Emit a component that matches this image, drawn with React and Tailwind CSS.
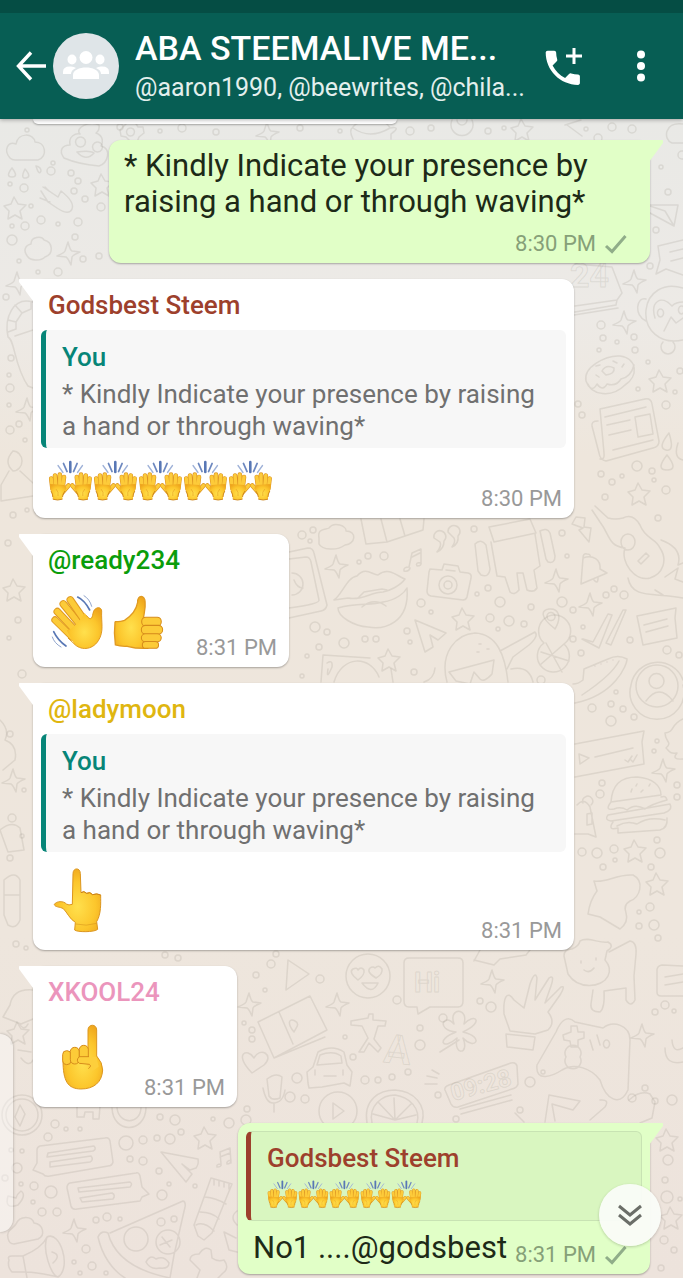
const circles = [
    // top left
    [27, 130, 2], [51, 171, 4], [53, 163, 2], [71, 173, 3], [78, 181, 3], [10, 184, 2], [24, 188, 4], [74, 191, 3],
    [85, 199, 3], [101, 207, 4], [31, 206, 2], [41, 220, 4], [58, 224, 2], [78, 222, 4], [12, 226, 2], [25, 226, 4],
    [12, 240, 5], [75, 237, 3], [19, 261, 2], [83, 259, 3], [38, 272, 2], [58, 272, 4], [99, 256, 3], [6, 297, 3],
    [11, 358, 3], [9, 375, 2], [10, 388, 4], [9, 405, 2], [19, 424, 3], [10, 430, 4], [25, 440, 2], [13, 515, 3], [27, 510, 2],
    [8, 543, 3], [18, 620, 3], [9, 638, 2], [22, 674, 4], [10, 734, 3], [24, 790, 2], [12, 818, 4], [22, 836, 2], [10, 858, 3], [16, 944, 3],
    // strip under the header
    [120, 127, 3], [160, 131, 2], [182, 128, 4], [216, 132, 3], [300, 128, 3], [340, 131, 2], [410, 131, 4], [431, 128, 3], [488, 131, 3],
    [504, 128, 2], [586, 129, 2], [612, 127, 4], [632, 129, 4], [598, 138, 4], [661, 167, 2], [682, 155, 4], [668, 192, 3],
    [656, 230, 3], [650, 266, 3], [601, 325, 4], [603, 338, 3], [617, 342, 2], [634, 337, 3], [599, 350, 2], [635, 350, 3],
    [648, 362, 2], [680, 371, 3], [638, 389, 2], [666, 405, 4], [675, 392, 2], [578, 404, 3], [582, 415, 3],
    [601, 474, 3], [637, 466, 5], [652, 471, 3], [622, 476, 2], [612, 482, 3], [654, 480, 2], [666, 490, 4], [605, 497, 3],
    // between the bubbles
    [302, 535, 4], [313, 530, 3], [368, 556, 3], [359, 562, 2], [384, 556, 4], [474, 529, 3], [562, 533, 3], [567, 556, 2],
    [421, 603, 4], [431, 612, 2], [488, 588, 3], [477, 594, 2], [500, 602, 5], [531, 607, 3], [562, 602, 5], [573, 610, 3],
    [315, 627, 5], [327, 632, 3], [344, 643, 5], [365, 639, 3], [376, 639, 3], [319, 647, 3], [307, 656, 2], [407, 631, 3], [410, 642, 2],
    [490, 618, 4], [509, 621, 5], [524, 624, 3], [498, 629, 2], [583, 627, 2], [573, 639, 3], [630, 640, 3], [581, 653, 3],
    [606, 595, 3], [614, 589, 3], [624, 595, 4], [658, 518, 3], [667, 650, 4], [679, 655, 3], [414, 672, 3], [302, 676, 2],
    [541, 680, 4], [592, 708, 4], [611, 704, 3], [616, 692, 2], [623, 709, 3], [611, 721, 5], [634, 717, 3], [657, 741, 2], [654, 751, 2],
    [602, 783, 3], [600, 794, 4], [677, 785, 3], [677, 797, 3], [582, 852, 4], [597, 853, 5], [614, 849, 4], [615, 860, 2], [603, 867, 3],
    [657, 840, 3], [660, 853, 5], [651, 867, 3], [650, 907, 4], [639, 912, 2], [654, 925, 5], [639, 926, 3], [658, 938, 3],
    [310, 541, 2], [26, 948, 2], [165, 955, 3], [178, 958, 3], [276, 954, 3], [256, 975, 3], [271, 964, 4], [265, 990, 2],
    // lower right
    [244, 1023, 2], [252, 1030, 3], [252, 1039, 3], [320, 979, 4], [397, 1000, 4], [345, 1037, 2], [353, 1057, 3], [297, 1078, 5],
    [365, 1080, 4], [378, 1080, 3], [392, 1077, 3], [408, 1072, 3], [290, 1097, 5], [305, 1099, 4], [247, 1109, 3], [246, 1120, 5],
    [420, 1045, 5], [420, 1028, 3], [443, 1018, 4], [480, 1001, 3], [491, 1007, 5], [438, 1095, 3], [456, 1119, 3], [530, 1082, 5],
    [543, 1072, 2], [520, 1110, 3], [665, 1005, 4], [655, 1012, 3], [674, 1011, 2], [632, 1098, 4], [645, 1088, 3], [655, 1101, 3], [672, 1100, 5],
    [668, 1160, 5], [665, 1180, 3], [667, 1197, 6], [680, 1199, 2], [664, 1240, 4], [674, 1250, 3], [661, 1268, 3],
    // lower left
    [55, 1124, 4], [66, 1129, 2], [80, 1129, 2], [48, 1137, 4], [22, 1151, 2], [11, 1150, 2], [17, 1168, 5], [5, 1178, 3],
    [126, 1143, 7], [143, 1140, 4], [157, 1138, 3], [170, 1139, 5], [181, 1132, 3], [160, 1117, 3], [175, 1120, 5], [229, 1123, 5],
    [213, 1119, 2], [130, 1159, 3], [143, 1161, 4], [159, 1171, 3], [34, 1186, 4], [21, 1184, 2], [51, 1192, 6], [33, 1202, 2],
    [42, 1212, 4], [57, 1212, 4], [162, 1195, 5], [169, 1184, 2], [195, 1186, 2], [96, 1220, 3], [107, 1217, 4], [120, 1219, 2],
    [86, 1249, 4], [74, 1262, 2], [92, 1266, 4], [80, 1273, 2], [106, 1273, 2],
]

const sparkles = [
    [268, 133], [69, 253], [18, 283], [635, 281], [625, 322], [28, 409], [337, 566], [557, 580], [591, 604], [664, 770],
    [338, 1004], [250, 1004], [493, 981], [75, 1230], [643, 1035], [14, 780],
]

const stars = [
    [15, 208], [102, 185], [522, 130], [660, 381], [639, 494], [463, 619], [389, 660], [635, 851], [657, 884],
    [205, 1138], [18, 1033], [667, 1140], [671, 1218], [14, 590],
]

const doodles = [
    // clouds
    "M10 158C3 150 8 141 16 144C18 132 34 133 35 142C46 142 48 157 38 160H15Q12 160 10 158",
    "M28 257C22 250 26 245 31 244C31 236 42 236 44 240C53 242 54 254 45 257C40 262 30 260 28 257",
    "M319 538C317 528 326 530 329 528C334 521 347 526 346 531C357 531 356 544 345 545C337 551 322 550 319 544Z",
    "M8 1238C6 1230 13 1229 16 1224C20 1215 32 1216 34 1223C43 1224 46 1235 38 1239L14 1244Q9 1244 8 1238",
    "M683 124C664 121 663 140 672 143H683",
    // raindrops
    "M12 168Q5 177 12 177T12 168M25 169Q20 179 26 178T25 169M36 166Q39 176 41 171Q41 167 36 166",
    "M669 433Q657 448 666 450T669 433M678 443Q673 458 683 460M667 455Q655 470 667 470T667 455",
    // smiling pile
    "M64 158C58 150 63 145 70 145C68 136 76 133 80 134C74 128 90 120 99 125Q100 130 96 133C104 136 103 143 101 146C112 149 108 163 99 166C88 165 73 162 64 158M77 152Q86 162 94 153Q90 150 77 152",
    "M80 137a5 5 0 1 0 1 0M97 142a5 5 0 1 0 1 0",
    // hand
    "M43 187L58 197L61 191Q75 202 72 209Q69 216 57 208L48 202L41 191M40 198L50 202M45 187L49 191",
    // planet
    "M353 139C350 133 350 129 353 127C359 118 386 118 390 128Q402 126 391 134L391 139M353 128Q370 140 390 128",
    "M125 125l4-4 6 1 3 5 5 0 1 6-5 4-2 5-7-1-4-4-5-1-1-6zM130 128a4 4 0 1 0 1 0",
    "M452 120a11 11 0 1 0 20 0M457 120a5 5 0 1 0 10 0M565 125L581 120M567 125L582 136",
    // backpack
    "M33 302C13 296 4 318 8 337C15 340 14 366 28 386L33 388M8 332L16 329V322L8 320M16 322L22 313L15 305M22 313L31 309V302M15 336L33 330",
    // bust
    "M13 451A9 10 0 1 1 13 471Q3 462 13 451M9 471L1 485V501L33 496M20 471L33 483",
    // calendar and bubble on the right
    "M575 264L612 267L622 293L617 300L575 306M575 312L616 305L617 300M574 315L618 308",
    "M683 240L658 246L660 260L656 274L666 269L683 275M670 252L683 249M671 261L683 258",
    "M650 205L678 205L674 226L650 213M650 206L665 211L674 226",
    // monkey
    "M683 288C664 282 648 292 646 310C644 330 660 345 683 340M646 299C637 296 633 315 646 321M655 318C650 302 661 294 672 306Q676 302 683 302M664 331l7-14 5 6 7-5M660 309a3 4 0 1 0 1 0M681 306a3 4 0 1 0 1 0M663 342a7 7 0 1 0 10 0",
    // donut
    "M586 381C583 367 606 355 620 356C637 358 639 376 625 385C612 398 591 396 586 381M588 384Q592 393 597 384Q603 392 607 384Q616 387 621 379Q631 377 634 365M602 371q4-7 12-3q1 6-8 7zM596 366l4-1M613 361l4 2M622 367l2-3M596 375l3 2",
    // newspaper
    "M600 409L645 399Q651 398 652 404L659 441Q659 447 653 448L606 461Q600 460 599 453L592 426Q591 421 598 421M600 409L604 453Q605 460 600 459M605 417L646 407M607 425L630 420M609 435L631 430M613 450L653 440M635 417L650 414L653 434L638 437Z",
    // guitar at the right edge
    "M592 510L600 522C610 535 608 546 625 548C620 562 635 582 650 578C663 574 668 560 660 548C656 538 645 539 640 525Q633 513 623 518Q615 520 608 518L595 506M621 542a7 8 0 1 0 14 0a7 8 0 1 0-14 0M638 561l8-8 3 3-8 8zM661 540Q683 548 678 565L683 563M628 578C632 600 655 592 683 598M665 577L678 568L675 579L683 582M655 590L663 595",
    // gift box and phone
    "M361 519L366 544L387 542L423 530L424 519M387 542L381 519M405 536L400 519",
    "M289 552L308 548Q313 548 314 553L327 605Q326 610 321 611L289 618M289 559L306 557Q310 557 311 562L319 600Q320 604 289 608M292 573a10 10 0 1 1 0 22M294 580q3 8 9 8",
    // lips and camera
    "M334 600C342 595 347 577 357 576C366 566 372 575 378 575C389 566 398 577 405 579C400 586 389 591 383 592C371 592 362 601 348 598ZM338 608C357 602 370 606 383 602C397 600 405 592 407 588C410 624 383 630 368 627C354 626 338 617 338 608M359 597l5-5 18-3 5 1M362 607q12-10 24-1",
    "M430 569L442 570L444 564L458 566L460 572L468 573Q472 574 471 578L467 597Q466 600 463 600L431 596Q427 595 427 591L429 572Z",
    "M439 585a9 9 0 1 0 18 0a9 9 0 1 0-18 0M444 585a4 4 0 1 0 8 0a4 4 0 1 0-8 0M446 570l9 1",
    // quotes, notes
    "M434 538A6 6 0 1 1 444 541Q444 549 437 552Q442 546 440 542ZM448 532A6 6 0 1 1 458 536Q459 544 452 547Q456 542 454 538Z",
    "M409 567L412 553L421 549L421 563M409 567q-6 0-5 4q5 1 6-3M421 563q-6-1-4 3q5 0 4-4M412 557l8-4",
    // android
    "M489 527L530 519L536 533L494 542ZM491 542L497 576L505 577L510 592Q514 596 519 590L517 573L523 573L527 590Q534 593 537 588L534 570L540 566L535 534M475 544Q481 538 486 545L490 569Q489 578 481 575L478 571ZM540 531Q547 527 550 533L555 556Q555 564 548 562L546 559Z",
    // bell, bolt
    "M583 558C593 554 601 560 600 569L607 573L581 584ZM583 558q0-5 4-4q4 0 3 3M594 580q4 5 4-2",
    "M576 517L585 518L584 527L591 528L589 542L579 530L583 528L572 524Z",
    // pins, plane, ticks, note
    "M554 628C540 617 541 610 549 609C559 608 562 617 555 629ZM547 617a4 4 0 1 0 8-1a4 4 0 1 0-8 1M415 620L446 633L438 640L430 635L433 647L425 652Z",
    "M583 639L593 642L608 614L612 615L599 648L582 639ZM606 643L611 645L626 610L623 610Z",
    "M637 616L676 608L675 618L677 638L643 645ZM644 625L667 619M646 632L668 626",
    // pineapple with glasses
    "M447 682C439 652 457 634 475 633C497 634 505 655 508 682M449 672L494 660L492 674Q484 683 480 679L474 672L470 684L456 681ZM500 651L535 632Q539 636 529 645L513 657L507 669M511 669Q529 665 533 682",
    "M479 644l2 0M487 649l2 0M477 652l2 0M435 668Q434 679 424 682M544 643a16 16 0 1 0 20 1a16 16 0 1 0-20-1M540 665L564 644M546 643L562 672M541 652L569 661",
    // radio
    "M321 682L323 655L370 658M334 682C342 655 370 655 379 677M327 663q6-4 5 4q-6 14-4 2M391 669L393 682",
    // sneaker, avatar, ribbon
    "M575 703C615 695 627 665 627 659Q618 654 608 659L584 669L583 680Q578 684 573 684M582 695Q612 675 619 661M595 666v0M601 664v0M607 662v0M613 660v0",
    "M631 685a27 27 0 1 0 52 0M631 685a27 27 0 0 1 52-5M636 686a21 21 0 0 0 42 0a21 21 0 0 0-42 0M649 681a7 7 0 1 0 15 0a7 7 0 1 0-15 0M646 701Q659 683 673 701",
    "M575 744L644 731L642 742L644 764L575 777M595 757L633 748M579 754l10 4-9 6zM625 760l3 2 4-6M631 760l2 2 4-7",
    "M683 719C670 725 675 732 665 733C665 742 673 742 666 748C670 752 670 754 677 753Q671 760 683 759",
    // burger
    "M611 802C612 785 620 777 637 777C653 778 661 786 661 795L611 802M611 802Q604 811 614 809Q621 806 627 810Q635 803 645 809Q652 804 667 800Q666 795 661 797M608 815L670 804Q673 810 664 813L611 821Q604 820 608 815M613 822Q607 831 618 828L618 833L660 830Q668 828 667 818M617 826q10-6 20-2 12-8 28-4M631 792l1-3M641 792l2-2M636 786l1-2M649 786l1-2",
    "M575 834L588 834L596 837L590 807Q584 797 577 805M587 814L592 813L592 824L587 825ZM583 803a5 5 0 1 1 8 2",
    "M594 881C608 883 615 874 633 875C645 881 640 898 630 901Q623 905 626 913Q629 922 620 929L600 917L588 914Q590 900 597 891Z",
    // puppy and lower right
    "M572 949Q579 946 580 941C588 936 600 944 608 942Q615 946 607 951L605 960Q612 968 608 976C602 988 578 990 568 974L564 956Q564 949 572 949M581 961v2M596 958v2M584 970q5 4 10-2M609 952L630 941Q637 942 636 954L634 976L635 1000Q631 1008 626 1000L626 988L604 991Q605 1008 600 1012Q590 1012 591 1004L593 990",
    "M683 966L662 965Q657 966 657 970V992Q657 996 661 996H683M665 977L683 974M665 985L683 982",
    // cursor, face, speech bubble
    "M288 960L286 990L309 974Z",
    "M346 976a22 22 0 1 0 44 0a22 22 0 1 0-44 0M358 980q-10-8-5-11q4-2 5 1q3-4 6 0q1 5-6 10M376 978q-10-6-6-10q3-2 5 0q4-4 7 1q1 5-6 9M362 983h16q-6 13-16 0",
    "M409 958H458Q463 958 463 963V1001Q463 1007 458 1007H430L418 1014L417 1007H409Q404 1007 404 1001V963Q404 958 409 958",
    "M474 960L494 965L500 959L526 955L530 950M480 950L474 961",
    // map
    "M258 1022L310 996L327 1030L274 1058ZM274 1058L325 1037M279 1012L293 1044M294 1032C286 1022 290 1018 295 1021C301 1024 295 1029 294 1032",
    // kanji, clover
    "M351 1021L368 1018L369 1014L373 1014L373 1020L386 1021L385 1026L378 1026L374 1039L381 1048L378 1052L369 1043L364 1052L359 1052L368 1038L362 1026L351 1025Z",
    "M456 1032C435 1030 444 1012 454 1024C448 1007 469 1007 464 1024C475 1012 485 1022 463 1032C485 1037 475 1051 463 1038C470 1055 453 1056 457 1038C443 1051 435 1040 456 1032M459 1040L440 1052",
    // hand holding
    "M504 1014C503 998 507 989 514 1000L524 1008L530 984Q535 970 537 978L535 1000L549 978Q555 974 551 986L545 1003L561 987Q566 985 560 995L548 1012Q556 1022 548 1030L535 1034L510 1031ZM506 1034L535 1037L533 1050L507 1047Z",
    // gamepad
    "M575 1022C567 1014 560 1022 556 1032L537 1065C535 1083 553 1076 562 1070C575 1062 592 1069 600 1080C606 1100 620 1107 628 1090L630 1040C630 1025 613 1020 603 1028ZM563 1035l8-3 0-6 6 0 1 6 6 0 0 6-6 2 0 7-7 0-1-6-6-1zM566 1057a8 8 0 1 0 14 0a8 8 0 1 0-14 0M590 1040l3 10M597 1035l3 10M606 1040a3 4 0 1 0 1 0",
    // heart, mic, car
    "M252 1073C233 1054 247 1047 254 1058C260 1046 275 1055 264 1065ZM267 1079Q276 1072 282 1077L280 1098Q272 1101 269 1096ZM263 1088Q266 1103 273 1103Q283 1103 285 1090M274 1103V1112",
    "M308 1083L307 1072L313 1067L318 1052Q332 1044 344 1052L347 1065L352 1072L350 1086L344 1083L322 1087L309 1088ZM317 1065L320 1055Q333 1050 341 1056L342 1063ZM315 1070v5M343 1070v5M324 1076h12",
    // alarm clock
    "M449 1085L511 1063Q516 1062 517 1066L518 1084Q517 1088 512 1089L458 1107Q453 1108 451 1104L445 1090Q444 1087 449 1085M460 1109L511 1095M461 1114L512 1100M425 1084L437 1084M427 1076L437 1078M432 1070L439 1074",
    // play, orange
    "M319 1111a18 18 0 1 0 38 0a18 18 0 1 0-38 0M333 1103L344 1111L333 1119Z",
    "M367 1123C363 1099 380 1090 395 1090C414 1091 427 1105 422 1123M372 1123C368 1105 383 1095 395 1095C409 1097 421 1108 417 1123M395 1120L394 1098M395 1120L378 1102M395 1120L411 1104M395 1120L373 1114M395 1120L416 1115",
    "M549 1095L580 1101L573 1110L552 1104L555 1121M549 1095L545 1122M515 1113L524 1122M590 1120L605 1107Q610 1099 600 1100M629 1100Q640 1090 650 1094L655 1102L652 1118L640 1123",
    "M683 1062Q665 1066 665 1048M683 1048Q673 1054 672 1040",
    // left column
    "M33 990Q13 988 10 1005L3 1017L21 1024L33 1019M19 1023q5 9 9 1M2 1115a19 19 0 1 0 40 0a19 19 0 1 0-40 0M6 1115a15 15 0 1 0 32 0a15 15 0 1 0-32 0M20 1105L25 1114L20 1126L15 1117Z",
    "M77 1106V1117H84L85 1112H93V1119H99L100 1106M112 1108C113 1134 145 1134 146 1108M117 1108C119 1125 140 1125 141 1108",
    "M18 1050L31 1052M21 1058Q29 1068 33 1060M8 1196Q4 1210 18 1205Q27 1195 21 1191Q17 1194 16 1198Z",
    "M0 720Q10 730 5 740Q18 745 15 760L3 770M4 880Q15 870 20 880V920Q16 930 8 925L4 915ZM4 895H20M0 830Q12 820 20 828L24 850L8 852Z",
    // chat notes
    "M40 1146L105 1138Q109 1137 110 1141L113 1162Q112 1166 108 1166L50 1176Q45 1177 43 1174L33 1170L37 1163L37 1150Q37 1147 40 1146M48 1153L94 1146Q97 1149 93 1151L47 1157ZM50 1162L91 1156Q94 1160 90 1162L50 1167Z",
    "M70 1183L136 1173Q139 1172 140 1176L142 1187L149 1194L142 1197L140 1201L77 1209Q72 1210 71 1206L67 1188Q67 1184 70 1183M78 1188L130 1182Q133 1184 130 1187L79 1192ZM80 1198L112 1193Q116 1195 113 1199L82 1202Z",
    // paper plane, notes, bottle
    "M161 1152L198 1159Q199 1164 196 1168L190 1170L182 1164L192 1174L186 1182Z",
    "M221 1164L220 1152L230 1148L231 1163M221 1164q-5 0-4 3q5 0 4-3M231 1160q-5 1-4 4q4 0 4-4M220 1157l10-4",
    "M211 1178L232 1184L212 1233L204 1240L198 1236L194 1225ZM205 1197Q216 1198 226 1204M200 1212Q212 1212 219 1219M196 1225Q204 1221 214 1231M214 1179v6M219 1181v5M224 1182v5M229 1184v5",
    // pizza
    "M110 1233L183 1201Q186 1202 185 1207L174 1255L170 1278M98 1237Q101 1230 108 1233C115 1260 140 1272 170 1278M98 1237C102 1255 112 1270 125 1278M124 1239a12 12 0 1 0 24 0a12 12 0 1 0-24 0M156 1242a12 12 0 1 0 24 0a12 12 0 1 0-24 0M160 1245l12-5M162 1237l8 10M157 1222a4 4 0 1 0 8 0a4 4 0 1 0-8 0M171 1219a3 3 0 1 0 6 0a3 3 0 1 0-6 0M146 1262q4-8 10-3q8-4 13 4q0 6-9 5q-10 2-14-6",
    // megaphone
    "M9 1260Q7 1256 12 1256L23 1256Q42 1248 47 1237C60 1230 72 1268 58 1277C48 1275 38 1272 26 1272L12 1272Q7 1267 9 1260M23 1256L27 1278M47 1237C42 1250 51 1275 58 1277M52 1252Q62 1255 53 1263",
    // dog and leaf by the bubble
    "M190 1260Q190 1254 199 1254Q205 1245 211 1250L212 1258Q217 1262 224 1260Q230 1268 223 1273L218 1278M190 1260L200 1270L197 1278M224 1232L236 1238M224 1232L229 1250L237 1252M237 1211Q229 1217 237 1225",
]

const Wallpaper = () => (
    <svg
        className="absolute inset-0 w-full h-full"
        viewBox="0 119 683 1159"
        preserveAspectRatio="xMidYMin slice"
        fill="none"
        stroke="#8a8577"
        strokeOpacity="0.17"
        strokeWidth="1.5"
        strokeLinecap="round"
        strokeLinejoin="round"
        aria-hidden="true"
    >
        { circles.map(([x, y, r], i) => <circle key={i} cx={x} cy={y} r={r} />) }
        { sparkles.map(([x, y], i) => (
            <path key={i} transform={`translate(${x} ${y})`} d="M-1-11Q1-3 3-2L11-1Q4 2 3 4L2 12Q-1 5-3 4L-12 3Q-5 0-4-2Z" />
        )) }
        { stars.map(([x, y], i) => (
            <path key={i} transform={`translate(${x} ${y})`} d="M-1-11L3-4L11-3L5 3L7 11L0 7L-7 11L-6 3L-11-2L-4-4Z" />
        )) }
        { doodles.map((d, i) => <path key={i} d={d} />) }
        <g fontFamily="Roboto, sans-serif" fontWeight="700" strokeWidth="1">
            <text x="414" y="992" fontSize="27">Hi</text>
            <text x="383" y="1062" fontSize="40" transform="rotate(6 383 1062)">A</text>
            <text x="453" y="1101" fontSize="24" transform="rotate(-15 453 1101)">09:28</text>
            <text x="570" y="287" fontSize="34">24</text>
        </g>
    </svg>
)

const EmojiPaint = () => (
    <svg className="absolute w-0 h-0" aria-hidden="true">
        <defs>
            <radialGradient id="skin" cx="0.5" cy="0.6" r="0.65">
                <stop offset="0" stopColor="#ffe04d" />
                <stop offset="0.6" stopColor="#fcc62c" />
                <stop offset="1" stopColor="#eea51d" />
            </radialGradient>
        </defs>
    </svg>
)

const OneRaised = () => (
    <>
        <g strokeLinecap="round">
            <path stroke="#dc9421" strokeWidth="4.6" d="M3.2 18.5L4.5 29M7 15.5L8 27M11.8 14.6V27M16 17L14.6 28M20.5 25.5L14 33" />
            <path stroke="#fdcb3a" strokeWidth="3.4" d="M3.2 18.5L4.5 29M7 15.5L8 27M11.8 14.6V27M16 17L14.6 28M20.5 25.5L14 33" />
        </g>
        <path fill="url(#skin)" d="M2 24L16 25L18.5 28C17 33 14 34 14.5 39Q9.5 41 4.8 39C5 34 2 31 2 24" />
        <path stroke="#c98018" strokeWidth="0.9" d="M4.8 39.2Q9.5 40.8 14.5 39.2M14.5 37Q14.6 34 17 31M4.8 37Q4.8 34 3 31" />
        <path stroke="#e8a526" strokeWidth="0.7" d="M8 29Q11 32 10 36" />
    </>
)

const RaisedHands = ({ className }) => (
    <svg className={className} viewBox="0 0 45 42" fill="none" role="img" aria-label="Raising hands">
        <g stroke="#6c87bf" strokeLinecap="round">
            <path strokeWidth="2.6" stroke="#5877b5" d="M22.3 2V12" />
            <path strokeWidth="1.8" d="M15.5 3.5L19 11.5M29.1 3.5L25.6 11.5" />
            <path strokeWidth="1.3" stroke="#9fb2d8" d="M10 5.5L15 12.5M34.5 5.5L29.5 12.5" />
        </g>
        <OneRaised />
        <g transform="translate(44.8 0) scale(-1 1)"><OneRaised /></g>
    </svg>
)

const Wave = () => (
    <svg className="w-14 h-[58px]" viewBox="12 20 168 174" fill="none" role="img" aria-label="Waving hand">
        <g strokeLinecap="round">
            <path stroke="#e09a22" strokeWidth="22" d="M33 101L85 152" />
            <path stroke="#fccb38" strokeWidth="16" d="M33 101L85 152" />
            <path stroke="#e09a22" strokeWidth="23" d="M40 76L96 135" />
            <path stroke="#fccb38" strokeWidth="17" d="M40 76L96 135" />
            <path stroke="#e09a22" strokeWidth="23" d="M58 53L112 120" />
            <path stroke="#fccb38" strokeWidth="17" d="M58 53L112 120" />
            <path stroke="#e09a22" strokeWidth="23" d="M79 41L128 112" />
            <path stroke="#fccb38" strokeWidth="17" d="M79 41L128 112" />
        </g>
        <path fill="url(#skin)" d="M68 132C85 132 110 100 122 80C135 99 143 104 146 84C149 60 173 58 173 74C171 108 181 135 163 163C144 193 108 192 90 172Z" />
        <path stroke="#e09a22" strokeWidth="3" d="M127 87C139 103 144 99 147 82C150 60 173 60 173 74C171 108 181 135 163 163C144 193 108 192 90 172L72 155" />
        <g stroke="#5877b5" strokeWidth="5" strokeLinecap="round">
            <path d="M101 32Q122 42 137 71M29 136Q42 163 66 179" />
            <path strokeWidth="3" stroke="#91a5cd" d="M120 28Q137 38 143 60M25 152Q31 171 51 182" />
        </g>
    </svg>
)

const ThumbsUp = () => (
    <svg className="w-[54px] h-[58px]" viewBox="200 22 160 172" fill="none" role="img" aria-label="Thumbs up">
        <path fill="url(#skin)" stroke="#e09a22" strokeWidth="4" d="M209 107Q228 107 237 103C258 90 272 72 276 50C275 26 298 28 298 48C300 68 295 80 293 98L306 186Q275 188 245 180Q225 181 210 176Q205 140 209 107" />
        <g fill="#fccb38" stroke="#d68c1c" strokeWidth="3">
            <rect x="288" y="94" width="58" height="26" rx="12" />
            <rect x="287" y="118" width="63" height="26" rx="12" />
            <rect x="287" y="143" width="59" height="24" rx="12" />
            <rect x="290" y="166" width="48" height="20" rx="10" />
        </g>
    </svg>
)

const PointUpBack = () => (
    <svg className="w-[54px] h-[68px]" viewBox="62 47 160 204" fill="none" role="img" aria-label="Backhand index pointing up">
        <path fill="url(#skin)" stroke="#dc961f" strokeWidth="3" d="M130 70C130 51 152 51 152 70L154 127Q163 120 171 129Q181 123 189 133Q201 128 213 134C213 160 215 190 201 214L204 237C195 246 142 246 135 239L137 216C120 206 113 187 101 175C91 169 75 171 74 162C80 152 102 151 110 161Q117 166 128 162Z" />
        <path stroke="#c97f15" strokeWidth="2.5" d="M154 127Q163 120 171 129Q181 123 189 133Q201 128 213 134" />
        <path stroke="#d18c18" strokeOpacity="0.6" strokeWidth="2.5" d="M138 221Q170 229 201 219" />
    </svg>
)

const PointUp = () => (
    <svg className="w-[54px] h-[68px]" viewBox="76 519 162 204" fill="none" role="img" aria-label="Index pointing up">
        <path fill="url(#skin)" stroke="#dc961f" strokeWidth="3" d="M172 540C172 521 198 521 198 540V618Q216 638 216 660C214 697 190 717 150 717C112 716 97 695 97 630L100 610L172 600Z" />
        <g fill="#fccb38" stroke="#d68c1c" strokeWidth="3">
            <rect x="96" y="602" width="25" height="42" rx="12" />
            <rect x="119" y="592" width="27" height="50" rx="13" />
            <rect x="146" y="586" width="27" height="48" rx="13" />
        </g>
        <path fill="#fdcf3c" d="M146 621H197L204 650L182 665L168 642L146 641Q134 631 146 621" />
        <path stroke="#d68c1c" strokeWidth="3" strokeLinecap="round" d="M174 620H146Q134 631 146 640L176 643Q184 648 174 655" />
    </svg>
)

const Tick = () => (
    <svg className="w-[23px] h-5" viewBox="0 0 23 20" fill="none" stroke="#90ad89" strokeWidth="3" role="img" aria-label="Sent">
        <path d="M2 12L8 17.5L21.5 2" />
    </svg>
)

const Time = ({ children, sent }) => (
    <div className={`flex flex-row items-center gap-2 text-[22px] leading-[22px] whitespace-nowrap ${ sent ? `text-[#86a078] pr-[15px]` : `text-[#999999] pr-1` }`}>
        <time>{children}</time>
        { sent && <Tick /> }
    </div>
)

const Bubble = ({ sent, name, nameColor, children }) => (
    <article className={`relative p-2 w-fit max-w-[541px] rounded-xl shadow-[0_1px_2px_rgba(0,0,0,0.3)] ${ sent ? `self-end bg-[#e1ffc7]` : `self-start bg-white` }`}>
        <svg
            className={`absolute top-0 w-7 h-6 ${ sent ? `-right-[13px] -scale-x-100` : `-left-[14px]` }`}
            viewBox="0 0 28 24"
            fill={ sent ? "#e1ffc7" : "#ffffff" }
            aria-hidden="true"
        >
            <path d="M1 0H28V22H14L0 3Q-1 0 1 0" />
        </svg>
        { name && <h2 className={`relative px-[7px] mb-[7px] text-[26px] leading-9 font-medium ${nameColor}`}>{name}</h2> }
        {children}
    </article>
)

const QuotedYou = () => (
    <blockquote className="border-l-[5px] border-[#078578] bg-[#f7f7f7] rounded-md px-4 pt-2.5 pb-1.5 text-[26px]">
        <h3 className="mb-1 leading-[34px] font-medium text-[#078578]">You</h3>
        <p className="leading-8 text-[#707070]">* Kindly Indicate your presence by raising a hand or through waving*</p>
    </blockquote>
)

const Header = () => (
    <header className="relative z-10 bg-[#075e54] border-t-[13px] border-[#054d44] text-white shadow-[0_1px_4px_rgba(0,0,0,0.3)]">
        <div className="flex flex-row items-center h-[106px] pl-4 pr-6">
            <button type="button" aria-label="Back" className="shrink-0">
                <svg className="w-[30px] h-[30px]" viewBox="0 0 30 30" fill="none" stroke="#ffffff" strokeWidth="3.4">
                    <path d="M15 1.5L2.5 15L15 28.5M2.5 15H30" />
                </svg>
            </button>
            <div className="shrink-0 ml-[7px] w-[66px] h-[66px] rounded-full bg-[#dfe5e8]">
                <svg viewBox="0 0 66 66" fill="#ffffff" role="img" aria-label="Group">
                    <circle cx="33" cy="24.5" r="6.5" />
                    <ellipse cx="19" cy="26.5" rx="4.5" ry="5" />
                    <ellipse cx="47" cy="26.5" rx="4.5" ry="5" />
                    <path d="M20 46V42C20 32 46 32 46 42V46ZM18 41H10V39Q10 33 18 33.5Q21 33.5 23 35Q18 37 18 41M48 41H56V39Q56 33 48 33.5Q45 33.5 43 35Q48 37 48 41" />
                </svg>
            </div>
            <div className="ml-4 flex-1 min-w-0 pt-0.5">
                <h1 className="mb-0.5 text-[34px] leading-10 font-medium truncate">ABA STEEMALIVE ME...</h1>
                <p className="text-[25px] leading-9 text-[#e3efed] truncate">@aaron1990, @beewrites, @chila...</p>
            </div>
            <button type="button" aria-label="Add call" className="shrink-0 ml-2 pt-1">
                <svg className="w-[38px] h-[42px]" viewBox="0 0 38 42" fill="#ffffff">
                    <path transform="translate(-5 -2) scale(1.9)" d="M6.62 10.79c1.44 2.83 3.76 5.14 6.59 6.59l2.2-2.2c.27-.27.67-.36 1.02-.24 1.12.37 2.33.57 3.57.57.55 0 1 .45 1 1V20c0 .55-.45 1-1 1-9.39 0-17-7.61-17-17 0-.55.45-1 1-1h3.5c.55 0 1 .45 1 1 0 1.25.2 2.45.57 3.57.11.35.03.74-.25 1.02l-2.2 2.2z" />
                    <path stroke="#ffffff" strokeWidth="3" d="M29 1V17M21 9H37" />
                </svg>
            </button>
            <button type="button" aria-label="More options" className="shrink-0 ml-10">
                <svg className="w-9 h-9" viewBox="0 0 36 36" fill="#ffffff">
                    <circle cx="18" cy="6.5" r="4" />
                    <circle cx="18" cy="18" r="4" />
                    <circle cx="18" cy="29.5" r="4" />
                </svg>
            </button>
        </div>
    </header>
)

const App = () => {
    return (
        <div className="min-h-screen flex flex-col font-[Roboto,sans-serif]">
            <EmojiPaint />
            <Header />
            <main className="relative flex-1 overflow-hidden bg-[linear-gradient(#e9e9e6,#edeae6_17%,#eee6dc_29%,#eee6dd_70%,#ede3dc)]">
                <Wallpaper />
                <div className="relative flex flex-col gap-4 px-[33px] pb-[2px]">
                    <div className="w-[364px] h-[5px] rounded-b-xl bg-white shadow-[0_1px_2px_rgba(0,0,0,0.3)]"></div>
                    <Bubble sent>
                        <p className="relative px-[7px] text-[31px] leading-9 text-[#1d2a17]">* Kindly Indicate your presence by raising a hand or through waving*</p>
                        <div className="flex justify-end mt-[13px]"><Time sent>8:30 PM</Time></div>
                    </Bubble>
                    <Bubble name="Godsbest Steem" nameColor="text-[#9d402c]">
                        <QuotedYou />
                        <div className="flex flex-row items-end justify-between h-[62px]">
                            <div className="flex flex-row pl-[7px] pb-2">
                                { [1, 2, 3, 4, 5].map(n => <RaisedHands key={n} className="w-[45px] h-[42px]" />) }
                            </div>
                            <Time>8:30 PM</Time>
                        </div>
                    </Bubble>
                    <Bubble name="@ready234" nameColor="text-[#0b9d0b]">
                        <div className="flex flex-row items-end h-[74px] gap-[30px]">
                            <div className="flex flex-row gap-2 pl-[7px] pb-2">
                                <Wave />
                                <ThumbsUp />
                            </div>
                            <Time>8:31 PM</Time>
                        </div>
                    </Bubble>
                    <Bubble name="@ladymoon" nameColor="text-[#dfb610]">
                        <QuotedYou />
                        <div className="flex flex-row items-end justify-between h-[90px]">
                            <div className="pl-[9px] pb-2"><PointUpBack /></div>
                            <Time>8:31 PM</Time>
                        </div>
                    </Bubble>
                    <Bubble name="XKOOL24" nameColor="text-[#eb95bc]">
                        <div className="flex flex-row items-end h-[82px] gap-[34px]">
                            <div className="pl-[15px] pb-2"><PointUp /></div>
                            <Time>8:31 PM</Time>
                        </div>
                    </Bubble>
                    <Bubble sent>
                        <blockquote className="relative h-[90px] border border-l-[5px] border-[#c8e3b3] border-l-[#9d402c] bg-[#d9f6c0] rounded-md pl-4 pt-2">
                            <h3 className="text-[26px] leading-9 font-medium text-[#9d402c]">Godsbest Steem</h3>
                            <div className="flex flex-row mt-1">
                                { [1, 2, 3, 4, 5].map(n => <RaisedHands key={n} className="w-[31px] h-[29px]" />) }
                            </div>
                        </blockquote>
                        <div className="flex flex-row items-end gap-2 pl-[7px] pt-[9px]">
                            <p className="text-[31px] leading-9 text-[#1d2a17] whitespace-nowrap">No1 ....@godsbest</p>
                            <Time sent>8:31 PM</Time>
                        </div>
                    </Bubble>
                </div>
            </main>
            <div className="fixed left-0 bottom-[46px] w-[13px] h-[198px] rounded-r-2xl bg-white/40 shadow-[0_0_3px_rgba(0,0,0,0.3)]"></div>
            <button
                type="button"
                aria-label="Scroll to bottom"
                className="fixed right-[22px] bottom-8 w-[62px] h-[62px] flex items-center justify-center rounded-full bg-[#fafcf8]/95 shadow-[0_1px_3px_rgba(0,0,0,0.2)]"
            >
                <svg className="w-6 h-6" viewBox="0 0 24 24" fill="none" stroke="#6b6e68" strokeWidth="3">
                    <path d="M1 3L12 12L23 3M1 12L12 21L23 12" />
                </svg>
            </button>
        </div>
    )
}

export default App
